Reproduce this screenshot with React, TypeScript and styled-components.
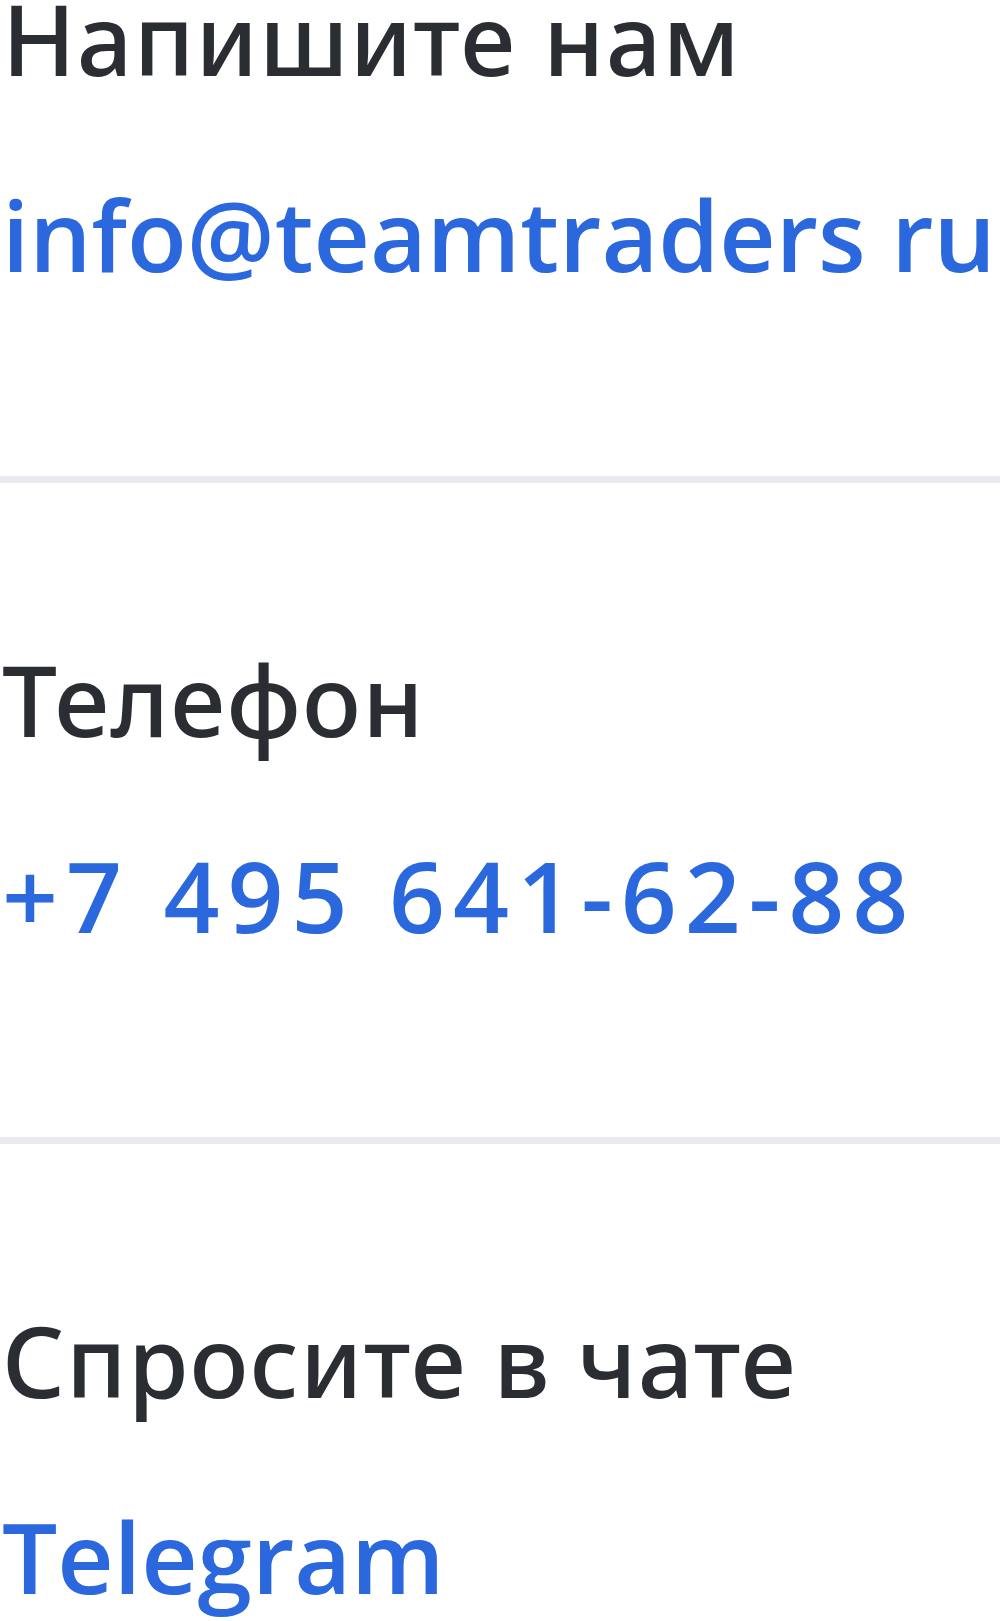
import React from "react";
import styled, { createGlobalStyle } from "styled-components";

const GlobalStyle = createGlobalStyle`
  html, body {
    margin: 0;
    padding: 0;
    background: #ffffff;
    overflow: hidden;
  }
  body {
    font-family: "Open Sans", "Noto Sans", sans-serif;
  }
`;

const Page = styled.main`
  width: 1000px;
  display: flex;
  flex-direction: column;
  padding-left: 2px;
  box-sizing: border-box;
`;

const Section = styled.section`
  display: flex;
  flex-direction: column;
  padding-bottom: 204px;
`;

const Label = styled.div`
  font-family: "Noto Sans", "Open Sans", sans-serif;
  font-size: 98px;
  line-height: 76px;
  height: 76px;
  font-weight: 500;
  letter-spacing: 1.2px;
  color: #2a2d32;
  white-space: nowrap;
`;

const Link = styled.a<{ $spacing?: number }>`
  margin-top: 120px;
  font-size: 98px;
  line-height: 76px;
  height: 76px;
  font-weight: 600;
  letter-spacing: ${(p) => p.$spacing ?? 0}px;
  color: #2b67dd;
  text-decoration: none;
  white-space: nowrap;
`;

const Divider = styled.hr`
  margin: 0 0 178px -2px;
  border: none;
  height: 7px;
  width: 1002px;
  background: #e8eaef;
`;

const items = [
  { label: "Напишите нам", link: "info@teamtraders ru", spacing: 0 },
  { label: "Телефон", link: "+7 495 641-62-88", spacing: 8 },
  { label: "Спросите в чате", link: "Telegram", spacing: 0 },
];

export default function App() {
  return (
    <>
      <GlobalStyle />
      <Page>
        {items.map((it, i) => (
          <React.Fragment key={it.label}>
            <Section>
              <Label>{it.label}</Label>
              <Link href="#" $spacing={it.spacing}>
                {it.link}
              </Link>
            </Section>
            {i < items.length - 1 && <Divider />}
          </React.Fragment>
        ))}
      </Page>
    </>
  );
}
